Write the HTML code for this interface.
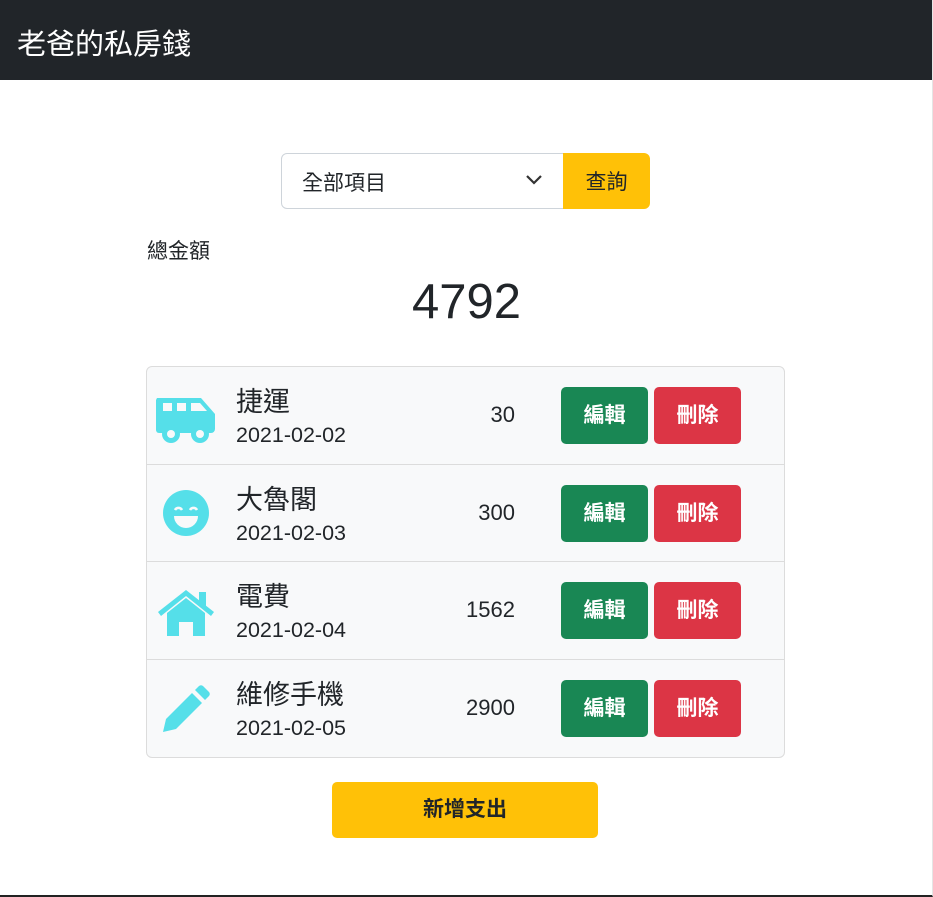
<!DOCTYPE html>
<html><head><meta charset="utf-8"><style>
*{box-sizing:border-box;margin:0;padding:0}
body{width:933px;height:897px;background:#fff;font-family:"Liberation Sans","Noto Sans CJK TC",sans-serif;color:#212529;position:relative;overflow:hidden;border-right:1px solid #e5e5e5;border-bottom:2px solid #222}
.nav{height:80px;background:#212529;color:#fff;font-size:29px;padding:21px 0 0 17px}
.abs{position:absolute}
.sel{left:281px;top:153px;width:283px;height:56px;border:1px solid #ced4da;border-radius:6px 0 0 6px;font-size:21px;padding:13px 0 0 20px}
.q{left:563px;top:153px;width:87px;height:56px;background:#ffc107;border-radius:0 6px 6px 0;font-size:21px;text-align:center;padding-top:13px}
.list{left:146px;top:366px;width:639px;height:392px;border:1px solid #dcdcdc;border-radius:6px;background:#f8f9fa;overflow:hidden}
.row{height:97.5px;border-bottom:1px solid #dcdcdc;position:relative}
.row:last-child{border-bottom:none}
.ic{position:absolute;left:8px;top:20px;width:62px;height:60px}
.nm{position:absolute;left:89px;top:13px;font-size:27px}
.dt{position:absolute;left:89px;top:56px;font-size:21.5px}
.am{position:absolute;right:269px;top:35px;font-size:22px}
.b{position:absolute;top:20px;width:87px;height:57px;border-radius:5px;color:#fff;font-size:21px;font-weight:bold;text-align:center;line-height:57px}
.e{left:414px;background:#198754}.d{left:507px;background:#dc3545}
.add{left:332px;top:782px;width:266px;height:56px;background:#ffc107;border-radius:5px;font-size:21px;font-weight:bold;text-align:center;line-height:56px}
</style></head><body>
<div class="nav">老爸的私房錢</div>
<div class="abs sel">全部項目<svg class="abs" style="left:243px;top:20px" width="18" height="12" viewBox="0 0 18 12"><path d="M2 2l7 7 7-7" fill="none" stroke="#333" stroke-width="2.2"/></svg></div>
<div class="abs q">查詢</div>
<div class="abs" style="left:147px;top:235px;font-size:21px">總金額</div>
<div class="abs" style="left:0;width:933px;text-align:center;top:274px;font-size:49px">4792</div>
<div class="abs list">
<div class="row"><svg class="ic" style="left:8px;top:24px" viewBox="0 0 62 50"><path d="M2 2h44l14 16v15a4 4 0 0 1-4 4H4a3 3 0 0 1-3-3V4z" fill="#55dfe9"/><rect x="8" y="7" width="9" height="8" fill="#f8f9fa"/><rect x="22" y="7" width="9" height="8" fill="#f8f9fa"/><path d="M36 7h9l7 8H36z" fill="#f8f9fa"/><circle cx="16" cy="38" r="9" fill="#55dfe9"/><circle cx="16" cy="38" r="4" fill="#f8f9fa"/><circle cx="45" cy="38" r="9" fill="#55dfe9"/><circle cx="45" cy="38" r="4" fill="#f8f9fa"/></svg><div class="nm">捷運</div><div class="dt">2021-02-02</div><div class="am">30</div><div class="b e">編輯</div><div class="b d">刪除</div></div>
<div class="row"><svg class="ic" viewBox="0 0 62 60"><circle cx="31" cy="28" r="23" fill="#55dfe9"/><path d="M20 25a4 4 0 0 1 7 0M35 25a4 4 0 0 1 7 0" stroke="#f8f9fa" stroke-width="2.5" fill="none"/><path d="M19 31h24a12 12 0 0 1-24 0z" fill="#f8f9fa"/></svg><div class="nm">大魯閣</div><div class="dt">2021-02-03</div><div class="am">300</div><div class="b e">編輯</div><div class="b d">刪除</div></div>
<div class="row"><svg class="ic" viewBox="0 0 62 60"><path d="M3 30L31 8l28 22-3 4-25-20-25 20z" fill="#55dfe9"/><rect x="44" y="10" width="7" height="14" fill="#55dfe9"/><path d="M12 31l19-15 19 15v23H38V40H24v14H12z" fill="#55dfe9"/></svg><div class="nm">電費</div><div class="dt">2021-02-04</div><div class="am">1562</div><div class="b e">編輯</div><div class="b d">刪除</div></div>
<div class="row"><svg class="ic" viewBox="0 0 62 60"><path d="M8 52l3-13 26-26 10 10-26 26z" fill="#55dfe9"/><path d="M40 10l4-4a3 3 0 0 1 4 0l6 6a3 3 0 0 1 0 4l-4 4z" fill="#55dfe9"/></svg><div class="nm">維修手機</div><div class="dt">2021-02-05</div><div class="am">2900</div><div class="b e">編輯</div><div class="b d">刪除</div></div>
</div>
<div class="abs add">新增支出</div>
</body></html>
